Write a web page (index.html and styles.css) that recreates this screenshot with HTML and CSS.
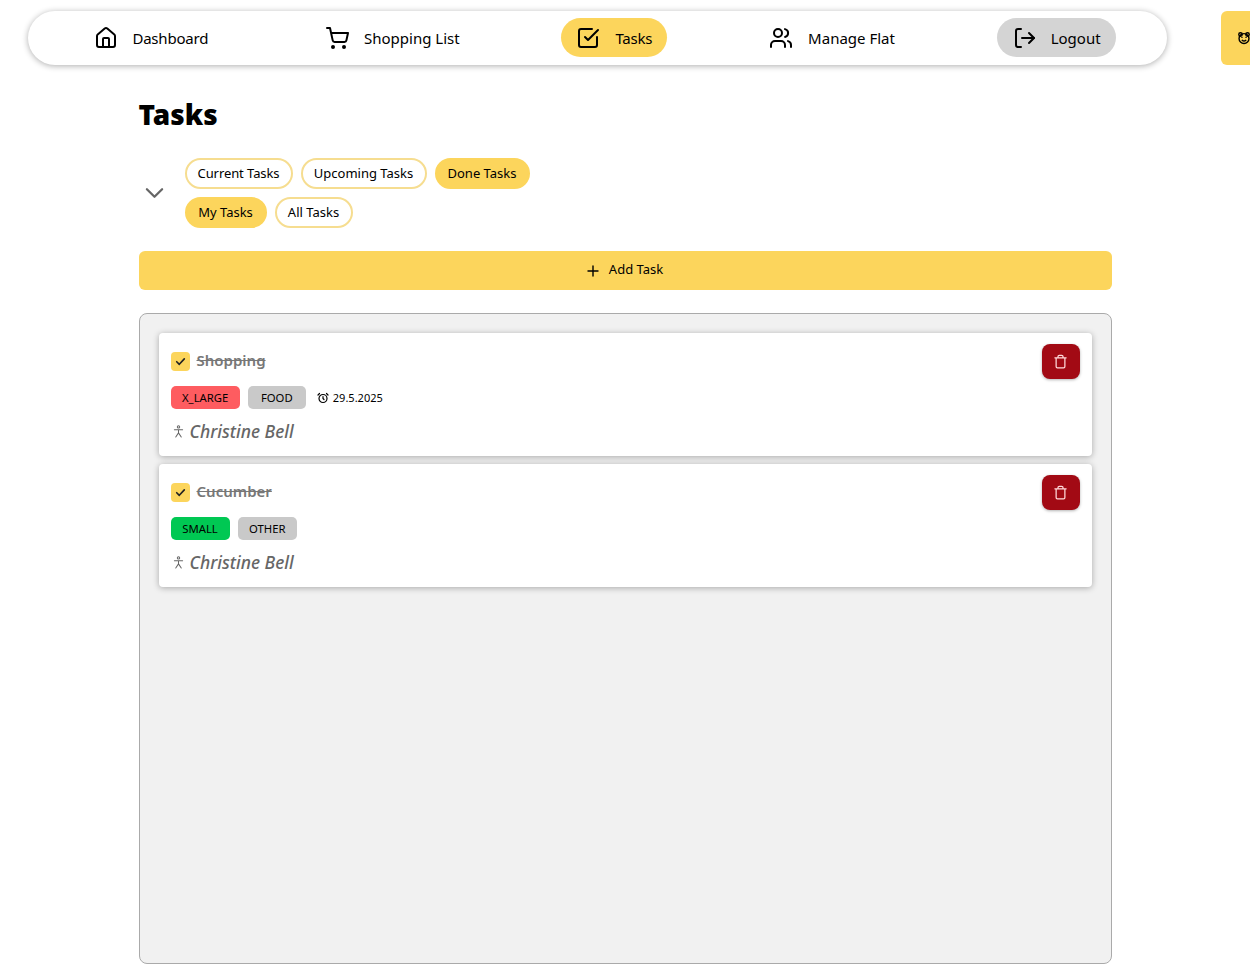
FILE: index.html
```html
<!DOCTYPE html>
<html lang="en">
<head>
<meta charset="utf-8">
<title>Tasks</title>
<link rel="stylesheet" href="styles.css">
</head>
<body>
<header class="top">
  <nav class="nav">
    <a class="nav-item">
      <svg class="nav-icon" viewBox="0 0 24 24"><path d="M15 21v-8a1 1 0 0 0-1-1h-4a1 1 0 0 0-1 1v8"/><path d="M3 10a2 2 0 0 1 .7-1.5l7-6a2 2 0 0 1 2.6 0l7 6a2 2 0 0 1 .7 1.5v9a2 2 0 0 1-2 2H5a2 2 0 0 1-2-2z"/></svg>
      <span class="tight nudge">Dashboard</span>
    </a>
    <a class="nav-item">
      <svg class="nav-icon" viewBox="0 0 24 24"><circle cx="8" cy="21" r="1"/><circle cx="19" cy="21" r="1"/><path d="M2 2h3l2.7 12.4a2 2 0 0 0 2 1.6h9.700a2 2 0 0 0 2-1.600L23 7H6"/></svg>
      <span>Shopping List</span>
    </a>
    <a class="nav-item is-active">
      <svg class="nav-icon" viewBox="0 0 24 24"><path d="M21 11v8a2 2 0 0 1-2 2H5a2 2 0 0 1-2-2V5a2 2 0 0 1 2-2h11"/><path d="m9 11 3 3L22 4"/></svg>
      <span class="tight">Tasks</span>
    </a>
    <a class="nav-item">
      <svg class="nav-icon" viewBox="0 0 24 24"><path d="M16 21v-2a4 4 0 0 0-4-4H6a4 4 0 0 0-4 4v2"/><circle cx="9" cy="7" r="4"/><path d="M22 21v-2a4 4 0 0 0-3-3.900"/><path d="M16 3.100a4 4 0 0 1 0 7.800"/></svg>
      <span>Manage Flat</span>
    </a>
    <a class="nav-item is-logout">
      <svg class="nav-icon" viewBox="0 0 24 24"><path d="M9 3H6a2 2 0 0 0-2 2v14a2 2 0 0 0 2 2h3"/><path d="m17 7 5 5-5 5"/><path d="M22 12H10"/></svg>
      <span>Logout</span>
    </a>
  </nav>
  <div class="side-tab">
    <svg class="side-icon" viewBox="0 0 24 24"><circle cx="6" cy="6" r="3"/><circle cx="18" cy="6" r="3"/><circle cx="12" cy="13" r="8.500"/><path d="M8.500 11h.01M15.500 11h.01M9 16c2 1.500 4 1.500 6 0"/></svg>
  </div>
</header>

<main class="page">
  <h1 class="title">Tasks</h1>

  <section class="filters">
    <svg class="chevron" viewBox="0 0 20 12"><path d="M2 2l8 8 8-8"/></svg>
    <div class="filter-rows">
      <div class="filter-row">
        <button class="pill pill-current">Current Tasks</button>
        <button class="pill pill-upcoming">Upcoming Tasks</button>
        <button class="pill is-on">Done Tasks</button>
      </div>
      <div class="filter-row">
        <button class="pill pill-my is-on">My Tasks</button>
        <button class="pill pill-all">All Tasks</button>
      </div>
    </div>
  </section>

  <button class="add-task">
    <svg class="plus" viewBox="0 0 12 12"><path d="M6 1v10M1 6h10"/></svg>
    <span>Add Task</span>
  </button>

  <section class="panel">
    <article class="card">
      <div class="card-body">
        <div class="card-head">
          <span class="check"><svg viewBox="0 0 12 12"><path d="M2.500 6.200l2.400 2.400 4.600-5"/></svg></span>
          <span class="card-title">Shopping</span>
        </div>
        <div class="tags">
          <span class="tag tag-red">X_LARGE</span>
          <span class="tag tag-gray">FOOD</span>
          <span class="date">
            <svg class="date-icon" viewBox="0 0 24 24"><circle cx="12" cy="13" r="8"/><path d="M12 9v4l2 2M5 3 2 6M22 6l-3-3"/></svg>
            29.5.2025
          </span>
        </div>
        <div class="person">
          <svg class="person-icon" viewBox="0 0 12 14"><circle cx="6" cy="2" r="1.300"/><path d="M1.500 5h9M6 5v3.500M6 8.500 3 13M6 8.500 9 13"/></svg>
          <span class="person-name">Christine Bell</span>
        </div>
      </div>
      <button class="delete" aria-label="Delete">
        <svg viewBox="0 0 24 24"><path d="M3 6h18M8 6V4a2 2 0 0 1 2-2h4a2 2 0 0 1 2 2v2M19 6v14a2 2 0 0 1-2 2H7a2 2 0 0 1-2-2V6"/></svg>
      </button>
    </article>

    <article class="card">
      <div class="card-body">
        <div class="card-head">
          <span class="check"><svg viewBox="0 0 12 12"><path d="M2.500 6.200l2.400 2.400 4.600-5"/></svg></span>
          <span class="card-title">Cucumber</span>
        </div>
        <div class="tags">
          <span class="tag tag-green">SMALL</span>
          <span class="tag tag-gray">OTHER</span>
        </div>
        <div class="person">
          <svg class="person-icon" viewBox="0 0 12 14"><circle cx="6" cy="2" r="1.300"/><path d="M1.500 5h9M6 5v3.500M6 8.500 3 13M6 8.500 9 13"/></svg>
          <span class="person-name">Christine Bell</span>
        </div>
      </div>
      <button class="delete" aria-label="Delete">
        <svg viewBox="0 0 24 24"><path d="M3 6h18M8 6V4a2 2 0 0 1 2-2h4a2 2 0 0 1 2 2v2M19 6v14a2 2 0 0 1-2 2H7a2 2 0 0 1-2-2V6"/></svg>
      </button>
    </article>
  </section>
</main>
</body>
</html>
```

FILE: styles.css
```css
* { box-sizing: border-box; }

html, body { height: 100%; }

body {
  margin: 0;
  overflow: hidden;
  background: #fff;
  color: #000;
  font-family: "Noto Sans", "Open Sans", sans-serif;
}

svg {
  fill: none;
  stroke: currentColor;
  stroke-linecap: round;
  stroke-linejoin: round;
  flex-shrink: 0;
}

.top {
  display: flex;
  align-items: flex-start;
  gap: 54px;
  padding: 11px 0 0 28px;
  height: 96px;
  overflow: hidden;
}

.nav {
  flex: 0 0 1139px;
  height: 54px;
  padding: 0 8px 1px;
  display: flex;
  justify-content: space-around;
  align-items: center;
  background: #fff;
  border-radius: 27px;
  box-shadow: 0 1px 6px rgba(0, 0, 0, 0.32);
}

.nav-item {
  display: flex;
  align-items: center;
  gap: 15px;
  height: 39px;
  padding: 0 15px;
  border-radius: 20px;
  font-size: 15px;
  white-space: nowrap;
}

.tight { letter-spacing: -0.2px; }
.nudge { margin-left: -1px; }

.nav-icon { width: 24px; height: 24px; stroke-width: 2; }

.is-active { background: #fcd55c; }
.is-logout { background: #d4d4d4; }

.side-tab {
  flex: 0 0 80px;
  height: 54px;
  padding-left: 16px;
  display: flex;
  align-items: center;
  background: #fcd55c;
  border-radius: 6px;
}

.side-icon { width: 14px; height: 14px; stroke-width: 2.400; }

.page {
  width: 973px;
  margin: 0 auto;
}

.title {
  margin: 0;
  font-size: 28px;
  line-height: 36px;
  font-weight: 900;
}

.filters {
  display: flex;
  align-items: center;
  gap: 21px;
  margin-top: 26px;
  padding-left: 6px;
}

.chevron { width: 19px; height: 12px; stroke: #666; stroke-width: 2.400; }

.filter-rows { display: flex; flex-direction: column; gap: 8px; }

.filter-row { display: flex; gap: 8px; }

.pill {
  height: 31px;
  padding: 0 11px 2px;
  border: 2px solid #f6dd90;
  border-radius: 16px;
  background: #fff;
  color: #000;
  font: 13px "Noto Sans", sans-serif;
}

.pill.is-on { background: #fcd55c; border-color: #fcd55c; }

.pill-current { letter-spacing: -0.08px; }
.pill-upcoming { min-width: 126px; }
.pill-my { min-width: 82px; }
.pill-all { min-width: 78px; }

.add-task {
  display: flex;
  justify-content: center;
  align-items: center;
  gap: 10px;
  width: 100%;
  height: 39px;
  margin-top: 23px;
  border: 0;
  border-radius: 6px;
  background: #fcd55c;
  color: #000;
  font: 13px "Noto Sans", sans-serif;
}

.add-task span { padding-bottom: 3px; }

.plus { width: 12px; height: 12px; stroke-width: 1.400; }

.panel {
  display: flex;
  flex-direction: column;
  gap: 8px;
  height: 651px;
  margin-top: 23px;
  padding: 19px;
  background: #f1f1f1;
  border: 1px solid #aaa;
  border-radius: 8px;
}

.card {
  display: flex;
  justify-content: space-between;
  align-items: flex-start;
  padding: 11px 12px 13px;
  background: #fff;
  border-radius: 4px;
  box-shadow: 0 1px 6px rgba(0, 0, 0, 0.3);
}

.card-body { display: flex; flex-direction: column; }

.card-head {
  display: flex;
  align-items: center;
  gap: 7px;
  height: 34px;
}

.check {
  display: flex;
  align-items: center;
  justify-content: center;
  width: 19px;
  height: 19px;
  border-radius: 4px;
  background: #fcd55c;
}

.check svg { width: 13px; height: 13px; stroke: #222; stroke-width: 1.500; }

.card-title {
  padding-bottom: 3px;
  font-size: 15px;
  font-weight: 600;
  color: #777;
  text-decoration: line-through;
}

.tags {
  display: flex;
  align-items: center;
  gap: 8px;
  margin-top: 8px;
}

.tag {
  min-width: 58px;
  height: 23px;
  padding: 0 11.500px;
  border-radius: 5px;
  font-size: 11.300px;
  line-height: 23px;
  text-align: center;
}

.tag-red { background: #fe5c60; }
.tag-gray { background: #c9c9c9; }
.tag-green { min-width: 59px; background: #00c853; }

.date {
  display: flex;
  align-items: center;
  gap: 4px;
  margin-left: 3px;
  font-size: 11px;
}

.date-icon { width: 12px; height: 12px; stroke-width: 2.400; }

.person {
  display: flex;
  align-items: center;
  gap: 6px;
  height: 23px;
  margin-top: 11px;
  padding-left: 2px;
  color: #666;
  font-size: 17.500px;
  font-style: italic;
  font-weight: 500;
}

.person-name { padding-bottom: 2px; }

.person-icon { width: 11px; height: 13px; stroke-width: 1.100; }

.delete {
  display: flex;
  align-items: center;
  justify-content: center;
  width: 38px;
  height: 35px;
  padding: 0;
  border: 0;
  border-radius: 8px;
  background: #a20a14;
  color: #ffd9d9;
  box-shadow: 0 1px 3px rgba(0, 0, 0, 0.3);
}

.delete svg { width: 15px; height: 15px; stroke-width: 2; }
```
